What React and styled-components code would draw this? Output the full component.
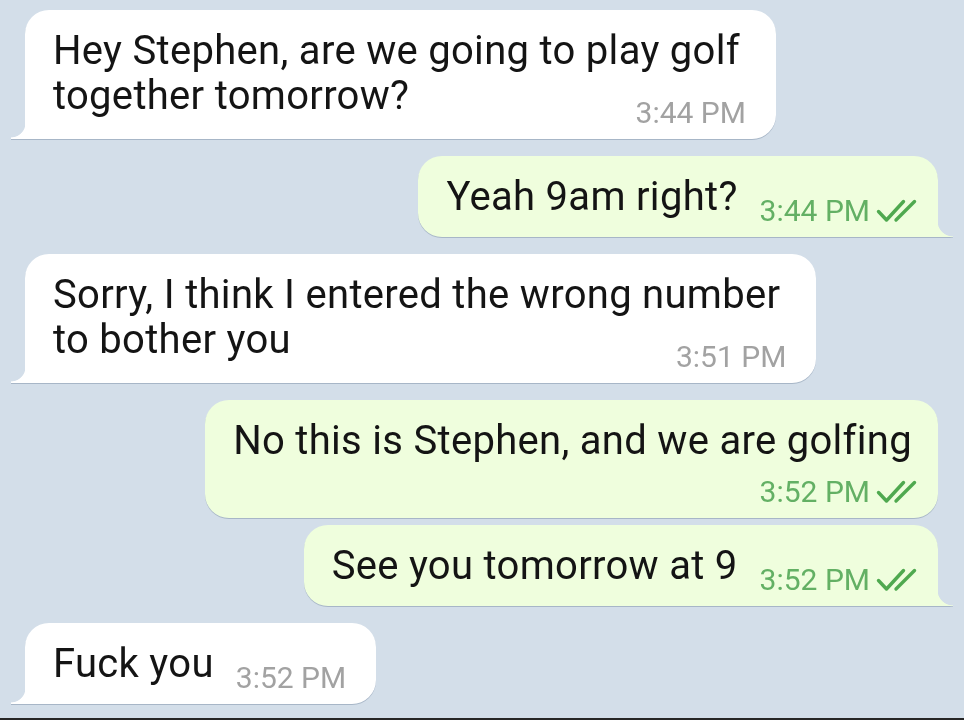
import React from 'react';
import styled, { createGlobalStyle, css } from 'styled-components';

const GlobalStyle = createGlobalStyle`
  html, body { margin: 0; padding: 0; background: #d3dee9; }
  body { font-family: Roboto, "Noto Sans", Arial, sans-serif; -webkit-font-smoothing: antialiased; }
`;

const Screen = styled.div`
  width: 964px;
  height: 720px;
  display: flex;
  flex-direction: column;
  background: #d3dee9;
  overflow: hidden;
`;

const Feed = styled.div`
  flex: 1;
  display: flex;
  flex-direction: column;
  padding: 10px 26px 0 25px;
`;

const Row = styled.div`
  display: flex;
  justify-content: ${(p) => (p.$out ? 'flex-end' : 'flex-start')};
  margin-top: ${(p) => (p.$first ? 0 : p.$grouped ? 7 : 17)}px;
`;

const Bubble = styled.div`
  position: relative;
  display: flex;
  flex-direction: column;
  background: ${(p) => (p.$out ? '#effedd' : '#ffffff')};
  border-radius: 24px;
  padding: 18px ${(p) => (p.$out ? 18 : 30)}px 12px 28px;
  filter: drop-shadow(0 1.5px 0.6px rgba(86, 108, 138, 0.35));
  ${(p) =>
    p.$tail &&
    (p.$out
      ? css`
          border-bottom-right-radius: 0;
          &::after {
            content: '';
            position: absolute;
            right: -15px;
            bottom: 0;
            width: 15px;
            height: 16px;
            background: radial-gradient(circle at 100% 0, transparent 15px, #effedd 15.8px);
          }
        `
      : css`
          border-bottom-left-radius: 0;
          &::after {
            content: '';
            position: absolute;
            left: -14px;
            bottom: 0;
            width: 14px;
            height: 16px;
            background: radial-gradient(circle at 0 0, transparent 14px, #ffffff 14.8px);
          }
        `)}
`;

const Text = styled.div`
  font-size: 40px;
  line-height: 45px;
  letter-spacing: 0.3px;
  color: #141414;
  white-space: nowrap;
  margin-right: ${(p) => p.$gap || 0}px;
`;

const LastRow = styled.div`
  display: flex;
  align-items: flex-end;
  justify-content: ${(p) => (p.$stacked ? 'flex-end' : 'space-between')};
  margin-top: ${(p) => (p.$stacked ? 14 : 0)}px;
  & > ${Text} {
    margin-bottom: ${(p) => (p.$multi ? 9 : 6)}px;
  }
`;

const Meta = styled.div`
  display: flex;
  align-items: center;
  gap: 6px;
  flex: none;
  margin-left: 22px;
`;

const Time = styled.span`
  font-size: 30px;
  line-height: 29px;
  color: ${(p) => (p.$out ? '#63b064' : '#a2a2a2')};
  white-space: nowrap;
`;

const CheckIcon = styled.svg`
  display: block;
  width: 44px;
  height: 24px;
  fill: none;
  stroke: #4fa94f;
  stroke-width: 3.4;
  stroke-linecap: round;
  stroke-linejoin: round;
`;

const Footer = styled.div`
  height: 2px;
  background: #262626;
`;

const DoubleCheck = () => (
  <CheckIcon viewBox="0 0 44 24">
    <path d="M2.5 12.5 L10.5 21 L27.5 2.5" />
    <path d="M20 21 L38.5 2.5" />
  </CheckIcon>
);

const messages = [
  { out: false, lines: ['Hey Stephen, are we going to play golf', 'together tomorrow?'], time: '3:44 PM', tail: true },
  { out: true, lines: ['Yeah 9am right?'], time: '3:44 PM', tail: true },
  { out: false, lines: ['Sorry, I think I entered the wrong number', 'to bother you'], time: '3:51 PM', tail: true },
  { out: true, lines: ['No this is Stephen, and we are golfing'], time: '3:52 PM', tail: false, stacked: true },
  { out: true, lines: ['See you tomorrow at 9'], time: '3:52 PM', tail: true },
  { out: false, lines: ['Fuck you'], time: '3:52 PM', tail: true },
];

function Message({ m }) {
  const multi = m.lines.length > 1;
  const head = m.stacked ? m.lines : m.lines.slice(0, -1);
  const last = m.stacked ? null : m.lines[m.lines.length - 1];
  return (
    <Bubble $out={m.out} $tail={m.tail}>
      {head.map((line, i) => (
        <Text key={i} $gap={m.stacked ? 8 : 6}>
          {line}
        </Text>
      ))}
      <LastRow $stacked={m.stacked} $multi={multi}>
        {last && <Text>{last}</Text>}
        <Meta>
          <Time $out={m.out}>{m.time}</Time>
          {m.out && <DoubleCheck />}
        </Meta>
      </LastRow>
    </Bubble>
  );
}

export default function App() {
  return (
    <>
      <GlobalStyle />
      <Screen>
        <Feed>
          {messages.map((m, i) => (
            <Row
              key={i}
              $out={m.out}
              $first={i === 0}
              $grouped={i > 0 && messages[i - 1].out === m.out}
            >
              <Message m={m} />
            </Row>
          ))}
        </Feed>
        <Footer />
      </Screen>
    </>
  );
}
